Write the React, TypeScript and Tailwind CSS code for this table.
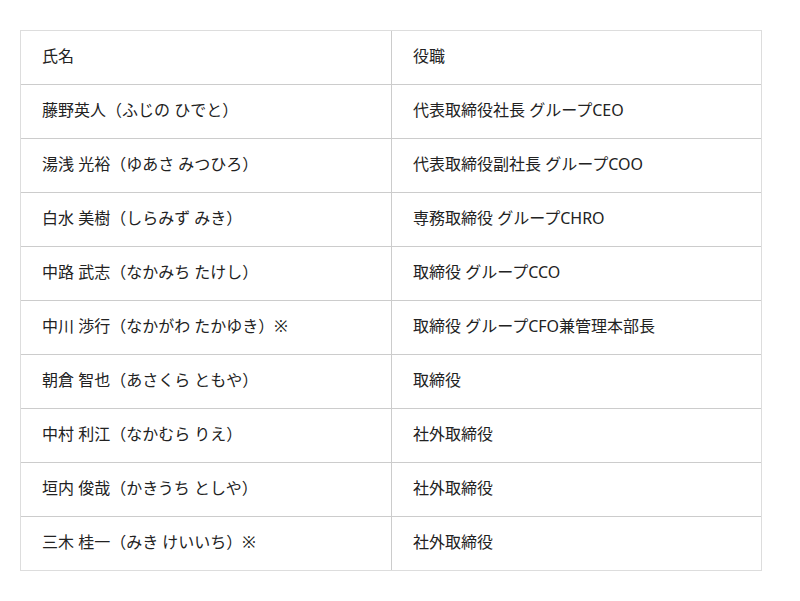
const rows: [string, string][] = [
  ['氏名', '役職'],
  ['藤野英人（ふじの ひでと）', '代表取締役社長 グループCEO'],
  ['湯浅 光裕（ゆあさ みつひろ）', '代表取締役副社長 グループCOO'],
  ['白水 美樹（しらみず みき）', '専務取締役 グループCHRO'],
  ['中路 武志（なかみち たけし）', '取締役 グループCCO'],
  ['中川 渉行（なかがわ たかゆき）※', '取締役 グループCFO兼管理本部長'],
  ['朝倉 智也（あさくら ともや）', '取締役'],
  ['中村 利江（なかむら りえ）', '社外取締役'],
  ['垣内 俊哉（かきうち としや）', '社外取締役'],
  ['三木 桂一（みき けいいち）※', '社外取締役'],
]

export default function App() {
  return (
    <div className="min-h-[601px] w-[800px] bg-white pl-[20px] pt-[30px] font-['Noto_Sans','Noto_Sans_CJK_JP',sans-serif] text-[16px] text-[#222]">
      <div className="w-[742px] border border-[#ddd]">
        {rows.map(([name, title], i) => (
          <div
            key={i}
            className={`grid grid-cols-2 ${i > 0 ? 'h-[54px] border-t border-[#ccc]' : 'h-[53px]'}`}
          >
            <div className="flex items-center pb-[3px] pl-[21px]">{name}</div>
            <div className="flex items-center border-l border-[#ccc] pb-[3px] pl-[21px]">{title}</div>
          </div>
        ))}
      </div>
    </div>
  )
}
